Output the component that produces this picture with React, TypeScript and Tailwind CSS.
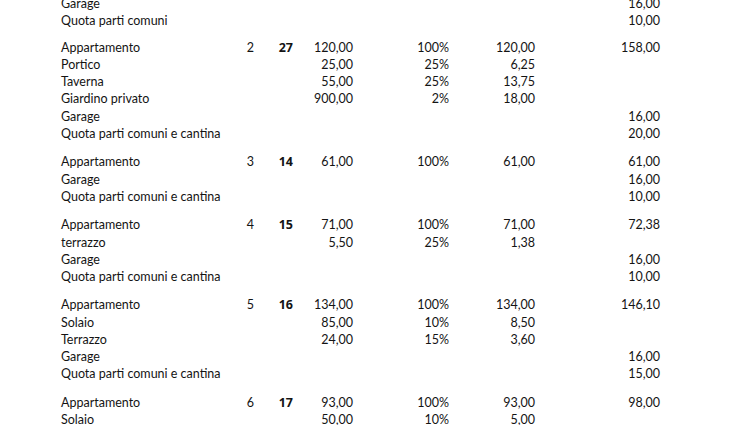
type Row = {
  label: string;
  n?: string;
  id?: string;
  sup?: string;
  pct?: string;
  eq?: string;
  tot?: string;
};

const groups: { gap: string; rows: Row[] }[] = [
  {
    gap: "",
    rows: [
      { label: "Garage", tot: "16,00" },
      { label: "Quota parti comuni", tot: "10,00" },
    ],
  },
  {
    gap: "mt-[9.5px]",
    rows: [
      { label: "Appartamento", n: "2", id: "27", sup: "120,00", pct: "100%", eq: "120,00", tot: "158,00" },
      { label: "Portico", sup: "25,00", pct: "25%", eq: "6,25" },
      { label: "Taverna", sup: "55,00", pct: "25%", eq: "13,75" },
      { label: "Giardino privato", sup: "900,00", pct: "2%", eq: "18,00" },
      { label: "Garage", tot: "16,00" },
      { label: "Quota parti comuni e cantina", tot: "20,00" },
    ],
  },
  {
    gap: "mt-[11.4px]",
    rows: [
      { label: "Appartamento", n: "3", id: "14", sup: "61,00", pct: "100%", eq: "61,00", tot: "61,00" },
      { label: "Garage", tot: "16,00" },
      { label: "Quota parti comuni e cantina", tot: "10,00" },
    ],
  },
  {
    gap: "mt-[11.4px]",
    rows: [
      { label: "Appartamento", n: "4", id: "15", sup: "71,00", pct: "100%", eq: "71,00", tot: "72,38" },
      { label: "terrazzo", sup: "5,50", pct: "25%", eq: "1,38" },
      { label: "Garage", tot: "16,00" },
      { label: "Quota parti comuni e cantina", tot: "10,00" },
    ],
  },
  {
    gap: "mt-[11.4px]",
    rows: [
      { label: "Appartamento", n: "5", id: "16", sup: "134,00", pct: "100%", eq: "134,00", tot: "146,10" },
      { label: "Solaio", sup: "85,00", pct: "10%", eq: "8,50" },
      { label: "Terrazzo", sup: "24,00", pct: "15%", eq: "3,60" },
      { label: "Garage", tot: "16,00" },
      { label: "Quota parti comuni e cantina", tot: "15,00" },
    ],
  },
  {
    gap: "mt-[11.4px]",
    rows: [
      { label: "Appartamento", n: "6", id: "17", sup: "93,00", pct: "100%", eq: "93,00", tot: "98,00" },
      { label: "Solaio", sup: "50,00", pct: "10%", eq: "5,00" },
    ],
  },
];

export default function App() {
  return (
    <div
      className="w-[750px] h-[425px] overflow-hidden bg-white text-[#141414] text-[12.5px]"
      style={{ fontFamily: "Lato, 'Open Sans', sans-serif" }}
    >
      <div className="mt-[-5px] pl-[61px]">
        {groups.map((g, gi) => (
          <div key={gi} className={g.gap}>
            {g.rows.map((r, ri) => (
              <div key={ri} className="flex h-[17.2px] leading-[17.2px] whitespace-nowrap">
                <div className="w-[173px]">{r.label}</div>
                <div className="w-[20px] text-right">{r.n}</div>
                <div
                  className="w-[39px] text-right font-bold text-[12.5px]"
                  style={{ fontFamily: "'Open Sans', sans-serif" }}
                >
                  {r.id}
                </div>
                <div className="w-[60px] text-right">{r.sup}</div>
                <div className="w-[96px] text-right">{r.pct}</div>
                <div className="w-[86px] text-right">{r.eq}</div>
                <div className="w-[125px] text-right">{r.tot}</div>
              </div>
            ))}
          </div>
        ))}
      </div>
    </div>
  );
}
